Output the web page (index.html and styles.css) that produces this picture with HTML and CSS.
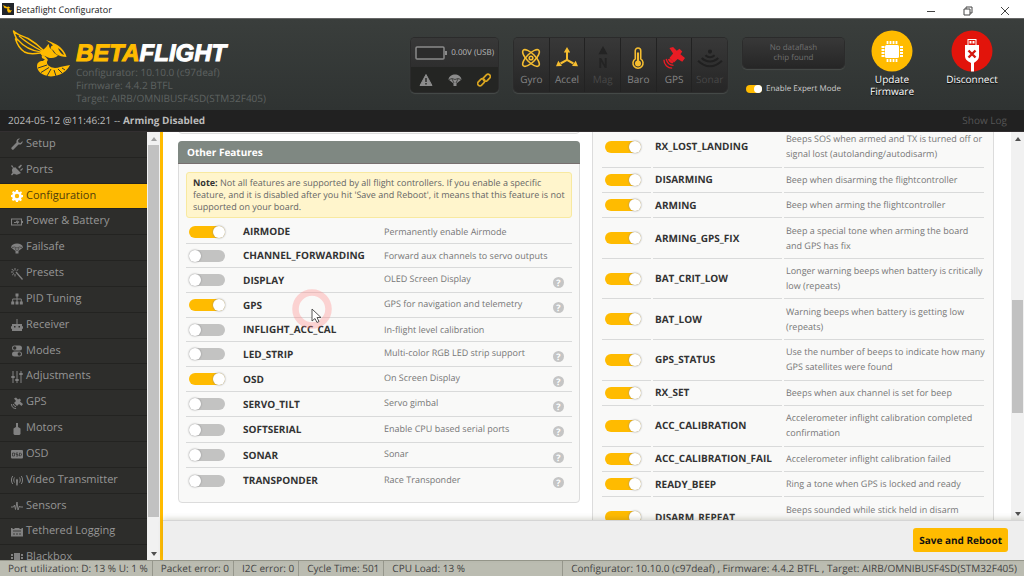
FILE: index.html
```html
<!DOCTYPE html>
<html lang="en">
<head>
<meta charset="utf-8">
<title>Betaflight Configurator</title>
<link rel="stylesheet" href="styles.css">
</head>
<body>
<div class="app">
  <div class="titlebar">
    <svg class="app-icon" viewBox="0 0 12 12"><rect width="12" height="12" fill="#22252a"/><path d="M1 2l4 2 1.500-.5 2 1.500-2 .5 2 2 1.500-.5-1.500 2.500H6L5 7l.5-1.500L2.500 5z" fill="#ffbb00"/></svg>
    <span class="app-name">Betaflight Configurator</span>
    <div class="window-buttons">
      <button type="button" aria-label="Minimize"><svg viewBox="0 0 10 10"><path d="M1 5.500h8"/></svg></button>
      <button type="button" aria-label="Restore"><svg viewBox="0 0 10 10"><path d="M1 3h6v6H1zM3 3V1h6v6H7"/></svg></button>
      <button type="button" aria-label="Close"><svg viewBox="0 0 10 10"><path d="M1 1l8 8M9 1L1 9"/></svg></button>
    </div>
  </div>

  <header class="header">
    <div class="brand">
      <svg class="bee" viewBox="0 0 60 48">
        <path d="M1.500 1C5 5 11 6 16 8.500C22 12 27 16 31 20L28 23C22 24 16 24 12.500 22C8 19 5 14 3.500 9L5 10C4 7 2 4 1.500 1z" fill="none" stroke="#ffbb00" stroke-width="1.500" stroke-linejoin="round"/>
        <path d="M5 9C12 17 20 21 29 22M7 6C15 13 22 17 30 21" fill="none" stroke="#ffbb00" stroke-width="1.200"/>
        <path d="M34 10C39 12 46 14 50 19C52 21 54 24 54.500 27C51 27 47 26 44 24L41 20C38 19 38 16 41 15.500C39 13 36 12 34 10z" fill="#ffbb00"/>
        <path d="M46 18C49 20 51 22 52 25C49 24 47 21 46 18z" fill="#363a38"/>
        <path d="M37 14C35 15 34 18 31 20L28 23C29 25 30 26 33 26C36 28 40 29 44 27L46 25.500C43 24 41 22 40 19.500C37 18 37 16 37 14z" fill="#ffbb00"/>
        <path d="M30 25C32 25 35 28 36 30C34 32 35 35 38 36.500C41 38.500 45 38 48 37L58 35C55 41 49 46 39 46.500C30 46 25 41 25 36C25 33 27 31 31 31L33 29C31 29 29 28 30 25z" fill="#ffbb00"/>
        <path d="M26 38l9-3M29 42.500l8-5M35 46l4-7M44 46l-2-6M50 43l-4-4M53 40l-3-2" stroke="#363a38" stroke-width="1"/>
      </svg>
      <div class="brand-text">
        <div class="wordmark"><span class="beta">BETA</span>FLIGHT</div>
        <div>Configurator: 10.10.0 (c97deaf)</div>
        <div>Firmware: 4.4.2 BTFL</div>
        <div>Target: AIRB/OMNIBUSF4SD(STM32F405)</div>
      </div>
    </div>

    <div class="battery panel">
      <div class="battery-top">
        <svg class="battery-icon" viewBox="0 0 32 14"><rect x="1" y="1" width="28" height="12" rx="1" fill="#2c2c2c" stroke="#8a8a8a" stroke-width="1.500"/><path d="M30 5h2v4h-2z" fill="#8a8a8a"/></svg>
        <span>0.00V (USB)</span>
      </div>
      <div class="battery-bottom">
        <svg viewBox="0 0 14 14"><path d="M7 1.500L13 12.500H1z" fill="#8c8c8c" stroke="#8c8c8c" stroke-linejoin="round"/><path d="M7 5v4M7 10v1.500" stroke="#242523" stroke-width="1.400"/></svg>
        <svg viewBox="0 0 14 14"><path d="M.5 6.500C1 3 4 1.500 7 1.500S13 3 13.500 6.500L8.500 10.500v2.500h-3v-2.500z" fill="#8c8c8c"/><path d="M4 6l2 4M10 6l-2 4M1 6.500L4 5.500l3 1 3-1 3 1" fill="none" stroke="#242523" stroke-width=".7"/></svg>
        <svg viewBox="0 0 14 14" fill="none" stroke="#d9a520" stroke-width="1.700"><rect x="5.800" y="2.400" width="8" height="4.600" rx="2.300" transform="rotate(-45 9.800 4.700)"/><rect x=".2" y="7" width="8" height="4.600" rx="2.300" transform="rotate(-45 4.200 9.300)"/></svg>
      </div>
    </div>

    <div class="sensors panel">
      <div class="sensor"><svg viewBox="0 0 24 24" fill="none" stroke="#f5bd30" stroke-width="1.700"><ellipse cx="12" cy="12" rx="12" ry="4.700" transform="rotate(45 12 12)"/><ellipse cx="12" cy="12" rx="12" ry="4.700" transform="rotate(-45 12 12)"/><circle cx="12" cy="12" r="2"/></svg>Gyro</div>
      <div class="sensor"><svg viewBox="0 0 24 24"><path d="M12 14V5M12 14l-7 4M12 14l7 4" stroke="#f5bd30" stroke-width="2.200"/><path d="M8.500 6L12 0l3.500 6zM0 21l2.500-6 4 5.800zM24 21l-2.500-6-4 5.800z" fill="#f5bd30"/></svg>Accel</div>
      <div class="sensor off"><svg viewBox="0 0 24 24"><path d="M7 8l5-9 5 9zM8 23V12h2l4 7v-7h2v11h-2l-4-7v7z" fill="#232323"/></svg>Mag</div>
      <div class="sensor"><svg viewBox="0 0 24 24"><path d="M9 13V4a3 3 0 0 1 6 0v9a5.500 5.500 0 1 1-6 0z" fill="none" stroke="#f5bd30" stroke-width="1.700"/><circle cx="12" cy="18" r="3.300" fill="#f5bd30"/><path d="M12 6v10" stroke="#f5bd30" stroke-width="2.400"/></svg>Baro</div>
      <div class="sensor"><svg viewBox="0 0 24 24"><g fill="#e81c24"><path d="M7 1l4-1 4 4 3-2 3 3-2 3 5 4-3 4-5-3-4 4-5-5 4-5z"/></g><path d="M7 13l4 4M1 14c0 5 4 9 9 9M3.500 13c1 5 3 7 8 7M6 13c1 3 2 4 5 4" stroke="#e81c24" stroke-width="1.500" fill="none"/></svg>GPS</div>
      <div class="sensor off"><svg viewBox="0 0 24 24" fill="none" stroke="#202020" stroke-width="2.200"><circle cx="12" cy="5" r="1.200"/><path d="M7 9c3 3 7 3 10 0M3 12c5 5 13 5 18 0M-1 15c8 8 18 8 26 0"/></svg>Sonar</div>
    </div>

    <div class="flash-column">
      <div class="dataflash panel">No dataflash<br>chip found</div>
      <label class="expert"><input class="mini-switch" type="checkbox" checked>Enable Expert Mode</label>
    </div>

    <button class="action" type="button">
      <svg viewBox="0 0 42 42"><circle cx="21" cy="21" r="20.500" fill="#ffbb00"/><rect x="14" y="15" width="14" height="13" rx="1.500" fill="#fff"/><path d="M16.500 11v3M19.500 11v3M22.500 11v3M25.500 11v3M16.500 29v3M19.500 29v3M22.500 29v3M25.500 29v3M10.500 17h3M10.500 20h3M10.500 23h3M10.500 26h3M29 17h3M29 20h3M29 23h3M29 26h3" stroke="#fff" stroke-width="1.800"/></svg>
      Update Firmware
    </button>
    <button class="action" type="button">
      <svg viewBox="0 0 42 42"><circle cx="21" cy="21" r="20.500" fill="#e2140b"/><path d="M16.500 15V9h9v6M14 15h14v11c0 4-3 5-5 7v8.500h-3V33c-3-2-6-3-6-7z" fill="#fff"/><path d="M17.500 10h7v5h-7z" fill="#e2140b"/><path d="M18.500 11h2v2.500h-2zM21.500 11h2v2.500h-2z" fill="#fff"/><path d="M17.500 20.500l7 7M24.500 20.500l-7 7" stroke="#d3180e" stroke-width="2.400"/></svg>
      Disconnect
    </button>
  </header>

  <div class="logbar">
    <span>2024-05-12 @11:46:21 -- <b>Arming Disabled</b></span>
    <a href="#log">Show Log</a>
  </div>

  <div class="workspace">
    <nav class="sidebar">
      <ul>
        <li><a href="#setup"><svg viewBox="0 0 12 12"><path d="M11.500 3L9.500 5 7.500 4.500 7 2.500l2-2C6.500 0 5 2 5.500 4.500L.8 9.200a1.400 1.400 0 0 0 2 2L7.500 6.500C10 7 12 5.500 11.500 3z"/></svg>Setup</a></li>
        <li><a href="#ports"><svg viewBox="0 0 12 12"><path d="M1 1l2 3 1-1 6 6-2 1c-2 1-4 1-5-.5L1 11.500 0 10.500l1.500-2C.5 6 1 5 2 4L0 2zM7 3l3-2.500 1 1L8.500 4.500zM9 6l2.500-2 .5 1-2 2z"/></svg>Ports</a></li>
        <li class="active"><a href="#configuration"><svg viewBox="0 0 12 12"><path fill-rule="evenodd" d="M5 0h2l.4 1.700 1.100.5L10 1.200 11 2.500l-.9 1.300.4 1.100L12 5v2l-1.500.4-.5 1.200.9 1.400-1.400 1.200-1.300-.9-1 .4L7 12H5l-.4-1.400-1.200-.4-1.400.8L.8 9.600l.9-1.300-.4-1L0 7V5l1.400-.3.4-1.100L1 2.200 2.400 1l1.300.9 1-.4zM6 3.800a2.200 2.200 0 1 0 0 4.400 2.200 2.200 0 0 0 0-4.400z"/></svg>Configuration</a></li>
        <li><a href="#power"><svg viewBox="0 0 12 12"><path d="M.5 3h10v6H.5zM11.500 5v2M3 6.500h2l1-1.500.5 2L8 5.500" fill="none" stroke="#818181" stroke-width="1.100"/></svg>Power &amp; Battery</a></li>
        <li><a href="#failsafe"><svg viewBox="0 0 12 12"><path d="M0 5.500C.5 2.500 3 1.500 6 1.500s5.500 1 6 4L7.500 9v2.500h-3V9z"/><path d="M1 5.500L3.500 5 6 6l2.500-1 2.500.5M4 6l1.500 3M8 6L6.500 9" fill="none" stroke="#2d2d2b" stroke-width=".6"/></svg>Failsafe</a></li>
        <li><a href="#presets"><svg viewBox="0 0 12 12"><path d="M4.500 4.500l1-1L12 11l-1 1zM3.500 0h1v2.500h-1zM0 3.500h2.500v1H0zM1 .8L3 2.500l-.5.5L.5 1.500zM7 1l.5.5L6 3l-.6-.5zM1 7l1.500-2 .7.5L1.500 7.500zM3.500 6h1v2.500h-1z"/></svg>Presets</a></li>
        <li><a href="#pid"><svg viewBox="0 0 12 12" ><path d="M6 3v6M1.700 9V6h8.600v3" fill="none" stroke="#818181"/><path d="M4.500.5h3v3h-3zM.2 8.500h3v3h-3zM4.500 8.500h3v3h-3zM8.800 8.500h3v3h-3z"/></svg>PID Tuning</a></li>
        <li><a href="#receiver"><svg viewBox="0 0 12 12"><path d="M5.500 0h1v5H11v2l1 .5v2L11 10v2H1v-2l-1-.5v-2L1 7V5h4.500z"/><path d="M3 7h1.500v1.500H3zM7.500 7H9v1.500H7.500z" fill="#2d2d2b"/></svg>Receiver</a></li>
        <li><a href="#modes"><svg viewBox="0 0 12 12"><rect x="1" y=".5" width="10" height="5" rx="2.500"/><rect x="1" y="6.500" width="10" height="5" rx="2.500"/><circle cx="3.700" cy="3" r="1.700" fill="#2d2d2b"/><circle cx="8.300" cy="9" r="1.700" fill="#2d2d2b"/></svg>Modes</a></li>
        <li><a href="#adjustments"><svg viewBox="0 0 12 12"><path d="M1.500 0h1v12h-1zM5.500 0h1v12h-1zM9.500 0h1v12h-1zM.3 5h3.400v2H.3zM4.300 8h3.400v2H4.300zM8.300 2h3.400v2H8.300z"/></svg>Adjustments</a></li>
        <li><a href="#gps"><svg viewBox="0 0 12 12"><path d="M3 1.500l2-1 2 2 1.500-1L10 3 9 4.500 12 7l-1.500 2L8 7 6 9 3 6l2-2z"/><path d="M.6 7c0 3 1.500 4.500 4.500 4.500M2.500 7c0 1.500 1 2.500 2.500 2.500" fill="none" stroke="#818181"/></svg>GPS</a></li>
        <li><a href="#motors"><svg viewBox="0 0 12 12"><path d="M5 0h2v4l2.500 1.500V11l-1 1h-5l-1-1V5.500L5 4z"/></svg>Motors</a></li>
        <li><a href="#osd"><svg viewBox="0 0 12 12"><rect y="2" width="12" height="8.500" rx="1"/><path d="M1.500 5h2v3h-2zM7 5H5v1.500h2V8H5M8.500 5h1l1 1v1l-1 1h-1z" fill="none" stroke="#2d2d2b" stroke-width=".7"/></svg>OSD</a></li>
        <li><a href="#vtx"><svg viewBox="0 0 12 12"><path d="M1.700 2C0 4.500 0 7.500 1.700 10M10.300 2c1.700 2.500 1.700 5.500 0 8M3.500 3.500C2.500 5 2.500 7 3.500 8.500M8.500 3.500c1 1.500 1 3.500 0 5" fill="none" stroke="#818181"/><path d="M6 4.500L7 6l-.3 5.500H5.300L5 6z"/></svg>Video Transmitter</a></li>
        <li><a href="#sensors"><svg viewBox="0 0 12 12"><path d="M0 7h2.500l1-2 1 4.500L6 2l1 8 1.500-4 .7 1H12" fill="none" stroke="#818181"/></svg>Sensors</a></li>
        <li><a href="#tethered"><svg viewBox="0 0 12 12"><path d="M0 2h1.500v1h2V2h5v1h2V2H12v8.500H0z"/><path d="M2 5h8M2 8h2M5 8h2M8 8h2" stroke="#2d2d2b" stroke-width=".8"/></svg>Tethered Logging</a></li>
        <li><a href="#blackbox"><svg viewBox="0 0 12 12"><path d="M3 1h6v11H3zM0 2h2v2H0zM0 5h2v2H0zM0 8h2v2H0zM10 2h2v2h-2zM10 5h2v2h-2zM10 8h2v2h-2z"/></svg>Blackbox</a></li>
      </ul>
      <div class="scroll side-scroll"><i class="arrow up dim"></i><i class="thumb"></i><i class="arrow down"></i></div>
    </nav>

    <main class="main">
      <div class="scroll-area">
        <div class="columns">
          <div class="column">
            <div class="card card-end"></div>
            <section class="card">
              <h2>Other Features</h2>
              <div class="card-body">
                <p class="note"><b>Note:</b> Not all features are supported by all flight controllers. If you enable a specific feature, and it is disabled after you hit 'Save and Reboot', it means that this feature is not supported on your board.</p>
                <table class="features">
                  <tr><td><input class="switch" type="checkbox" id="f1" checked></td><th><label for="f1">AIRMODE</label></th><td>Permanently enable Airmode</td><td></td></tr>
                  <tr><td><input class="switch" type="checkbox" id="f2"></td><th><label for="f2">CHANNEL_FORWARDING</label></th><td>Forward aux channels to servo outputs</td><td></td></tr>
                  <tr class="has-help"><td><input class="switch" type="checkbox" id="f3"></td><th><label for="f3">DISPLAY</label></th><td>OLED Screen Display</td><td><button type="button" class="help">?</button></td></tr>
                  <tr class="has-help"><td><input class="switch" type="checkbox" id="f4" checked></td><th><label for="f4">GPS</label></th><td>GPS for navigation and telemetry</td><td><button type="button" class="help">?</button></td></tr>
                  <tr><td><input class="switch" type="checkbox" id="f5"></td><th><label for="f5">INFLIGHT_ACC_CAL</label></th><td>In-flight level calibration</td><td></td></tr>
                  <tr class="has-help"><td><input class="switch" type="checkbox" id="f6"></td><th><label for="f6">LED_STRIP</label></th><td>Multi-color RGB LED strip support</td><td><button type="button" class="help">?</button></td></tr>
                  <tr class="has-help"><td><input class="switch" type="checkbox" id="f7" checked></td><th><label for="f7">OSD</label></th><td>On Screen Display</td><td><button type="button" class="help">?</button></td></tr>
                  <tr class="has-help"><td><input class="switch" type="checkbox" id="f8"></td><th><label for="f8">SERVO_TILT</label></th><td>Servo gimbal</td><td><button type="button" class="help">?</button></td></tr>
                  <tr class="has-help"><td><input class="switch" type="checkbox" id="f9"></td><th><label for="f9">SOFTSERIAL</label></th><td>Enable CPU based serial ports</td><td><button type="button" class="help">?</button></td></tr>
                  <tr class="has-help"><td><input class="switch" type="checkbox" id="f10"></td><th><label for="f10">SONAR</label></th><td>Sonar</td><td><button type="button" class="help">?</button></td></tr>
                  <tr class="has-help"><td><input class="switch" type="checkbox" id="f11"></td><th><label for="f11">TRANSPONDER</label></th><td>Race Transponder</td><td><button type="button" class="help">?</button></td></tr>
                </table>
              </div>
            </section>
          </div>
          <div class="column">
            <section class="card beeper-card">
              <table class="beepers">
                <tr><td><input class="switch" type="checkbox" id="b1" checked></td><th><label for="b1">RX_LOST_LANDING</label></th><td>Beeps SOS when armed and TX is turned off or<br>signal lost (autolanding/autodisarm)</td></tr>
                <tr><td><input class="switch" type="checkbox" id="b2" checked></td><th><label for="b2">DISARMING</label></th><td>Beep when disarming the flightcontroller</td></tr>
                <tr><td><input class="switch" type="checkbox" id="b3" checked></td><th><label for="b3">ARMING</label></th><td>Beep when arming the flightcontroller</td></tr>
                <tr><td><input class="switch" type="checkbox" id="b4" checked></td><th><label for="b4">ARMING_GPS_FIX</label></th><td>Beep a special tone when arming the board<br>and GPS has fix</td></tr>
                <tr><td><input class="switch" type="checkbox" id="b5" checked></td><th><label for="b5">BAT_CRIT_LOW</label></th><td>Longer warning beeps when battery is critically<br>low (repeats)</td></tr>
                <tr><td><input class="switch" type="checkbox" id="b6" checked></td><th><label for="b6">BAT_LOW</label></th><td>Warning beeps when battery is getting low<br>(repeats)</td></tr>
                <tr><td><input class="switch" type="checkbox" id="b7" checked></td><th><label for="b7">GPS_STATUS</label></th><td>Use the number of beeps to indicate how many<br>GPS satellites were found</td></tr>
                <tr><td><input class="switch" type="checkbox" id="b8" checked></td><th><label for="b8">RX_SET</label></th><td>Beeps when aux channel is set for beep</td></tr>
                <tr><td><input class="switch" type="checkbox" id="b9" checked></td><th><label for="b9">ACC_CALIBRATION</label></th><td>Accelerometer inflight calibration completed<br>confirmation</td></tr>
                <tr><td><input class="switch" type="checkbox" id="b10" checked></td><th><label for="b10">ACC_CALIBRATION_FAIL</label></th><td>Accelerometer inflight calibration failed</td></tr>
                <tr><td><input class="switch" type="checkbox" id="b11" checked></td><th><label for="b11">READY_BEEP</label></th><td>Ring a tone when GPS is locked and ready</td></tr>
                <tr><td><input class="switch" type="checkbox" id="b12" checked></td><th><label for="b12">DISARM_REPEAT</label></th><td>Beeps sounded while stick held in disarm<br>position</td></tr>
              </table>
            </section>
          </div>
        </div>
        <div class="scroll main-scroll"><i class="arrow up"></i><i class="thumb"></i><i class="arrow down"></i></div>
      </div>
      <div class="toolbar"><button type="button" class="save">Save and Reboot</button></div>
    </main>
  </div>

  <footer class="statusbar">
    <span>Port utilization: D: 13 % U: 1 %</span>
    <span>Packet error: 0</span>
    <span>I2C error: 0</span>
    <span>Cycle Time: 501</span>
    <span class="grow">CPU Load: 13 %</span>
    <span>Configurator: 10.10.0 (c97deaf) , Firmware: 4.4.2 BTFL , Target: AIRB/OMNIBUSF4SD(STM32F405)</span>
  </footer>

  <svg class="pointer" viewBox="0 0 40 40"><circle cx="20" cy="20" r="16.500" fill="none" stroke="#ff8080" stroke-opacity=".32" stroke-width="6.500"/><path d="M20 20v12l3-2.500 2 4 2-1-2-4h4z" fill="#fff" stroke="#444" stroke-width=".9"/></svg>
</div>
</body>
</html>
```
FILE: styles.css
```css
* { box-sizing: border-box; }
body { margin: 0; font-family: "Open Sans", "Noto Sans", sans-serif; font-size: 10px; color: #333; text-rendering: geometricPrecision; }
button { font: inherit; border: 0; padding: 0; background: none; color: inherit; text-rendering: inherit; }
a { color: inherit; text-decoration: none; }
input { margin: 0; }

.app { position: relative; display: flex; flex-direction: column; height: 100vh; overflow: hidden; }

.titlebar { display: flex; align-items: center; flex: 0 0 18px; padding-left: 2px; background: #fff; color: #222; }
.app-icon { width: 12px; height: 12px; margin-right: 2px; }
.app-name { font-size: 9px; }
.window-buttons { display: flex; margin-left: auto; padding: 4px 1px 0 0; }
.window-buttons button { display: flex; justify-content: center; width: 37px; }
.window-buttons svg { width: 10px; height: 10px; fill: none; stroke: #444; stroke-width: 1; }

.header { display: flex; flex: 0 0 92px; align-items: flex-start; gap: 16px; padding: 11px 20px 0 12px; border-top: 1px solid #666; background: linear-gradient(#3a3e3c, #2f3332); }
.brand { display: flex; gap: 4px; margin-right: auto; }
.bee { width: 60px; height: 48px; }
.brand-text { padding-top: 12px; color: #5e6261; line-height: 13px; }
.wordmark { color: #fff; font: italic bold 24px/24px "Liberation Sans", Arial, sans-serif; -webkit-text-stroke: 1px currentColor; }
.beta { color: #ffbb00; }
.panel { margin-top: 8px; border-radius: 4px; background: linear-gradient(#383838, #262626); box-shadow: 0 0 0 1px #2b2b2b, 0 1px 1px 1px #484c4a; overflow: hidden; }
.battery { width: 87px; height: 54px; color: #bbb; }
.battery-top { display: flex; align-items: center; justify-content: space-between; height: 29px; padding: 0 4px; font-size: 8px; white-space: nowrap; }
.battery-icon { width: 32px; height: 14px; }
.battery-bottom { display: flex; align-items: center; justify-content: space-around; height: 25px; background: #242523; }
.battery-bottom svg { width: 14px; height: 14px; }
.sensors { display: flex; width: 213px; height: 54px; }
.sensor { display: flex; flex: 1; flex-direction: column; align-items: center; gap: 3px; padding-top: 9px; border-right: 1px solid #222; color: #858585; line-height: 14px; }
.sensor:last-child { border-right: 0; }
.sensor svg { width: 22px; height: 22px; overflow: visible; }
.sensor.off { color: #474747; }
.flash-column { width: 101px; }
.dataflash { height: 30px; padding-top: 5px; color: #6f6f6f; font-size: 8px; line-height: 10px; text-align: center; }
.expert { display: flex; align-items: center; gap: 4px; margin-top: 15px; padding-left: 3px; color: #ccc; font-size: 8px; white-space: nowrap; line-height: 12px; }
.mini-switch { appearance: none; display: flex; justify-content: flex-end; width: 16px; height: 8px; border-radius: 4px; background: #ffbb00; }
.mini-switch::before { content: ""; width: 8px; height: 8px; border-radius: 50%; background: #fff; }
.action { display: flex; flex-direction: column; align-items: center; gap: 1px; width: 64px; color: #fff; line-height: 12px; text-shadow: 0 1px 1px #000; }
.action svg { width: 42px; height: 42px; }

.logbar { display: flex; flex: 0 0 22px; align-items: center; justify-content: space-between; padding: 0 17px 2px 8px; border-bottom: 1px solid #332f31; background: #212121; color: #bbb; }
.logbar a { color: #555; }

.workspace { display: flex; flex: 1; min-height: 0; }
.sidebar { display: flex; flex: 0 0 163px; border-right: 3px solid #ffbb00; background: #2d2d2b; overflow: hidden; }
.sidebar ul { display: flex; flex: 1; flex-direction: column; height: 439px; margin: 0; padding: 0; list-style: none; }
.sidebar li { display: flex; flex: 1; border-bottom: 1px solid #232321; color: #969696; font-size: 11px; }
.sidebar a { display: flex; flex: 1; align-items: center; gap: 3px; padding: 0 0 2px 11px; }
.sidebar svg { width: 12px; height: 12px; margin-top: 2px; fill: #818181; }
.sidebar .active { background: #ffbb00; color: #52400c; }
.sidebar .active svg { fill: #fff; }

.scroll { display: flex; flex: 0 0 13px; flex-direction: column; align-items: center; background: #f1f1f1; }
.arrow { margin: 5px 0 4px; border: 3px solid transparent; }
.arrow.up { border-top: 0; border-bottom: 4px solid #505050; }
.arrow.up.dim { border-bottom-color: #a0a0a0; }
.arrow.down { margin-top: auto; border-bottom: 0; border-top: 4px solid #505050; }
.thumb { width: 11px; background: #c1c1c1; }
.side-scroll .thumb { flex: 0 0 87%; }
.main-scroll .thumb { flex: 0 0 29%; margin-top: 155px; }

.main { display: flex; flex: 1; flex-direction: column; min-width: 0; background: #fff; }
.scroll-area { display: flex; flex: 1; min-height: 0; }
.columns { display: grid; flex: 1; grid-template-columns: 1fr 1fr; gap: 12px; padding: 0 17px 0 15px; overflow: hidden; }
.column { display: flex; flex-direction: column; gap: 7px; min-width: 0; margin-top: -6px; }
.card { border: 1px solid #dcdcdc; border-radius: 4px; background: #f9f9f8; }
.card-end { flex: 0 0 8px; }
.card h2 { margin: -1px -1px 0; padding: 3px 9px; border-bottom: 1px solid #776f6f; border-radius: 4px 4px 0 0; background: #7f8882; color: #fff; font-size: 10px; line-height: 16px; }
.card-body { padding: 8px 7px 9px; }
.note { margin: 0 0 2px; padding: 4px 6px; border: 1px solid #f8e9a0; border-radius: 3px; background: #fff5cc; color: #666; font-size: 9px; line-height: 12px; }
.note b, th { color: #333; }
table { width: 100%; border-collapse: separate; table-layout: fixed; }
td, th { padding: 0; border-bottom: 1px solid #d9dada; text-align: left; }
td { color: #777; font-size: 9px; line-height: 15px; }
th { font-size: 10px; line-height: 15px; }
.switch { appearance: none; display: flex; align-items: center; width: 36px; height: 12px; margin-left: 3px; border-radius: 6px; background: #c3c3c2; }
.switch::before { content: ""; width: 12px; height: 12px; border-radius: 50%; background: #fff; box-shadow: 0 0 2px #888; }
.switch:checked { justify-content: flex-end; background: #ffbb00; }
.features { border-spacing: 0; }
.features tr { height: 24px; }
.features .has-help { height: 25px; }
.features .has-help:nth-child(9) { height: 26px; }
.features td:nth-child(1) { width: 57px; }
.features th { width: 141px; }
.features td:nth-child(4) { width: 22px; }
.features .has-help td:nth-child(3) { padding-bottom: 3px; }
.features tr:last-child > * { border-bottom: 0; }
.help { display: block; width: 11px; height: 11px; margin: 4px 0 0 3px; border-radius: 50%; background: #c5c5c5; color: #fff; font-size: 9px; font-weight: bold; line-height: 11px; text-align: center; }
.beeper-card { padding: 0 7px; border-radius: 0; }
.beepers { height: 411px; border-spacing: 2px 0; }
.beepers td:nth-child(1) { width: 49px; }
.beepers th { width: 129px; padding-left: 2px; }
.beepers td:nth-child(3) { padding: 4px 0 5px 2px; white-space: nowrap; }

.toolbar { position: relative; display: flex; flex: 0 0 40px; align-items: center; justify-content: flex-end; padding: 0 16px 2px 0; border-top: 1px solid #d5d5d5; background: #eee; box-shadow: 0 -2px 5px rgba(90, 90, 60, .2); }
.save { padding: 4px 6px; border-radius: 3px; background: #ffbb00; color: #111; font-weight: bold; line-height: 16px; }

.statusbar { display: flex; flex: 0 0 16px; border-top: 1px solid #96978c; background: #bbbcb1; color: #444; white-space: nowrap; line-height: 15px; }
.statusbar span { padding: 0 4px 0 8px; border-right: 1px solid #96978c; }
.statusbar span:last-child { padding-right: 7px; border-right: 0; }
.statusbar .grow { flex: 1; }

.pointer { position: absolute; top: 289px; left: 292px; width: 40px; height: 40px; pointer-events: none; }
```
